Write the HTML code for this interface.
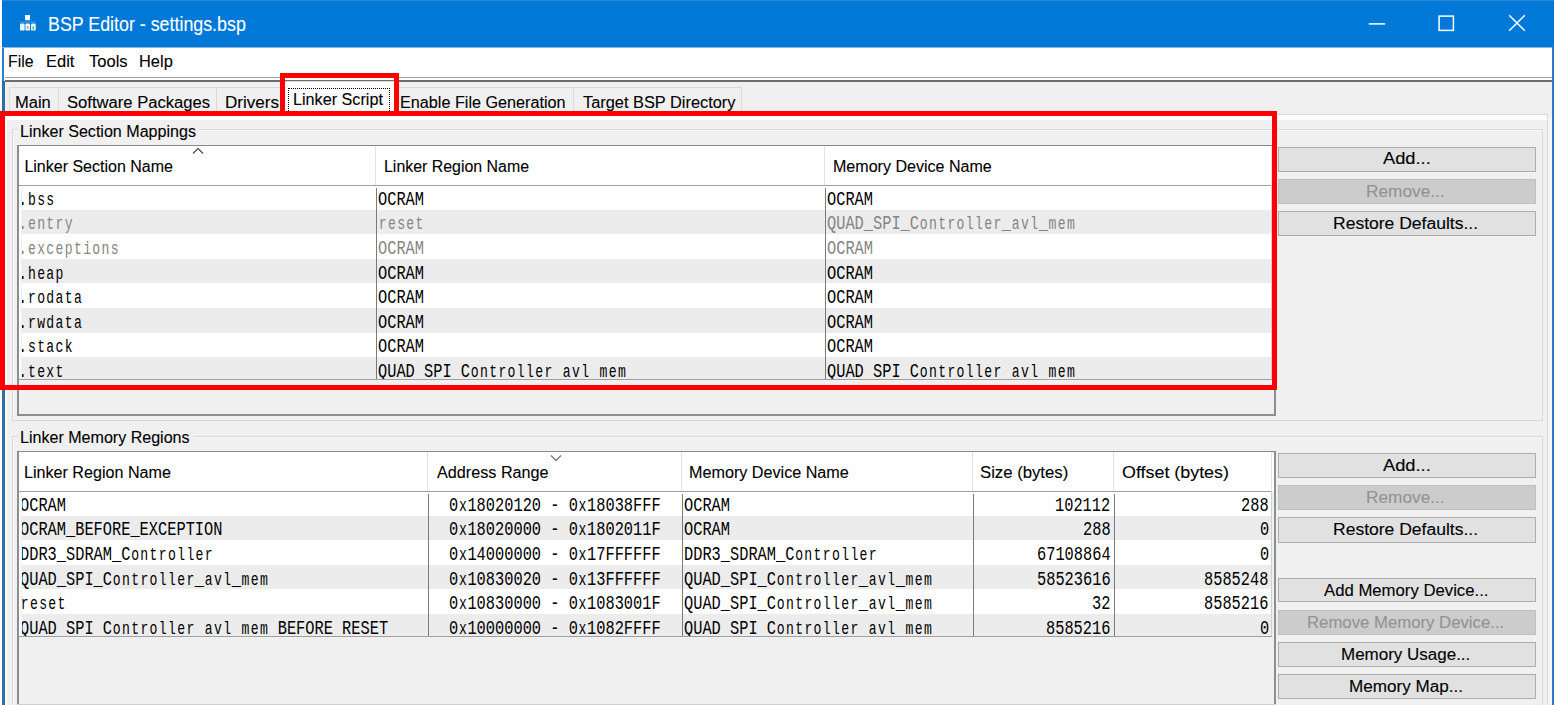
<!DOCTYPE html><html><head><meta charset="utf-8"><style>
html,body{margin:0;padding:0;width:1554px;height:705px;overflow:hidden;background:#fff}
body>div{position:absolute}
.t{white-space:pre;font-family:'Liberation Sans', sans-serif;-webkit-text-stroke:0.1px currentColor}
.lc{font-size:17.5px;letter-spacing:1.8px;position:relative;left:1px}
.m{position:absolute;white-space:pre;font-family:'Liberation Mono', monospace;font-size:20.5px;line-height:20.5px;transform:scaleX(0.7480);transform-origin:0 0}
</style></head><body>
<div style="left:0px;top:0px;width:1554px;height:705px;background:#f0f0f0"></div>
<div style="left:0px;top:0px;width:2px;height:705px;background:#fff"></div>
<div style="left:2px;top:0px;width:1552px;height:47px;background:#0078d7"></div>
<div style="left:2px;top:46px;width:1552px;height:1px;background:#0a70cc"></div>
<div style="left:2px;top:47px;width:1552px;height:1px;background:#80bbec"></div>
<div style="left:2px;top:0px;width:1552px;height:1px;background:#2a88d8"></div>
<div style="left:2px;top:48px;width:2px;height:33px;background:#2a80d4"></div>
<div style="left:2px;top:81px;width:3px;height:624px;background:#2f6fa8"></div>
<div style="left:1548px;top:117px;width:4px;height:588px;background:#f6f6f6"></div>
<div style="left:1552px;top:46px;width:2px;height:659px;background:#2a78c8"></div>
<svg style="position:absolute;left:16px;top:12px" width="24" height="24" viewBox="0 0 24 24">
<rect x="9" y="3" width="5" height="5.2" fill="#f4fbff"/>
<rect x="4" y="9.6" width="16" height="0.8" fill="#5aa8ec"/>
<rect x="4" y="11.6" width="4.6" height="7" rx="1.2" fill="#eaf6ff"/>
<rect x="9.4" y="11.6" width="4.6" height="7" rx="1.2" fill="#f2f8ff"/>
<rect x="15" y="11.6" width="4.8" height="7" rx="1.2" fill="#e0fbf4"/>
<rect x="10.8" y="14" width="1.8" height="3" fill="#e0a090"/>
<rect x="16.4" y="14.5" width="1.8" height="3" fill="#70c060"/>
</svg>
<div class="t" style="left:47.67px;top:14.85px;font-size:19.5px;line-height:19.5px;color:#fff;transform:scaleX(0.9140);transform-origin:0 0;">BSP Editor - settings.bsp</div>
<svg style="position:absolute;left:1360px;top:8px" width="180" height="30" viewBox="1360 8 180 30">
<path d="M1368.8 23.9 H1385.2" stroke="#fff" stroke-width="1.5" fill="none"/>
<rect x="1439.1" y="16.1" width="14.3" height="14.3" stroke="#fff" stroke-width="1.5" fill="none"/>
<path d="M1509.2 15.2 L1524.8 30.8 M1524.8 15.2 L1509.2 30.8" stroke="#fff" stroke-width="1.5" fill="none"/>
</svg>
<div style="left:4px;top:48px;width:1548px;height:29px;background:#fff"></div>
<div class="t" style="left:8.31px;top:54.40px;font-size:16px;line-height:16px;color:#000;transform:scaleX(0.9875);transform-origin:0 0;">File</div>
<div class="t" style="left:46.47px;top:54.40px;font-size:16px;line-height:16px;color:#000;transform:scaleX(1.0296);transform-origin:0 0;">Edit</div>
<div class="t" style="left:88.60px;top:54.40px;font-size:16px;line-height:16px;color:#000;transform:scaleX(1.0324);transform-origin:0 0;">Tools</div>
<div class="t" style="left:138.57px;top:54.40px;font-size:16px;line-height:16px;color:#000;transform:scaleX(1.0258);transform-origin:0 0;">Help</div>
<div style="left:4.5px;top:77px;width:1547.5px;height:1px;background:#a0a0a0"></div>
<div style="left:4.5px;top:78px;width:1547.5px;height:2px;background:#fff"></div>
<div style="left:4.5px;top:80px;width:1547.5px;height:1.5px;background:#6d6d6d"></div>
<div style="left:5px;top:114px;width:1543px;height:1px;background:#dadada"></div>
<div style="left:5px;top:115px;width:1542px;height:5px;background:#fdfdfd"></div>
<div style="left:5px;top:115px;width:2px;height:600px;background:#fbfdff"></div>
<div style="left:1547px;top:114px;width:1px;height:600px;background:#dadada"></div>
<div style="left:9px;top:87px;width:50px;height:28px;border:1px solid #dadada;border-bottom:none;box-sizing:border-box;background:#f0f0f0"></div>
<div class="t" style="left:15.27px;top:94.70px;font-size:16px;line-height:16px;color:#000;transform:scaleX(1.0303);transform-origin:0 0;">Main</div>
<div style="left:58px;top:87px;width:159px;height:28px;border:1px solid #dadada;border-bottom:none;box-sizing:border-box;background:#f0f0f0"></div>
<div class="t" style="left:66.66px;top:94.70px;font-size:16px;line-height:16px;color:#000;transform:scaleX(1.0382);transform-origin:0 0;">Software Packages</div>
<div style="left:216px;top:87px;width:68px;height:28px;border:1px solid #dadada;border-bottom:none;box-sizing:border-box;background:#f0f0f0"></div>
<div class="t" style="left:224.63px;top:94.70px;font-size:16px;line-height:16px;color:#000;transform:scaleX(1.0653);transform-origin:0 0;">Drivers</div>
<div style="left:394px;top:87px;width:180px;height:28px;border:1px solid #dadada;border-bottom:none;box-sizing:border-box;background:#f0f0f0"></div>
<div class="t" style="left:399.99px;top:94.70px;font-size:16px;line-height:16px;color:#000;transform:scaleX(1.0117);transform-origin:0 0;">Enable File Generation</div>
<div style="left:573px;top:87px;width:169px;height:28px;border:1px solid #dadada;border-bottom:none;box-sizing:border-box;background:#f0f0f0"></div>
<div class="t" style="left:583.40px;top:94.70px;font-size:16px;line-height:16px;color:#000;transform:scaleX(1.0228);transform-origin:0 0;">Target BSP Directory</div>
<div style="left:284px;top:81px;width:111px;height:35px;background:#fcfcfc;border:1px solid #dadada;border-bottom:none;box-sizing:border-box"></div>
<div style="left:288px;top:88px;width:102px;height:25px;border:1px dotted #000;box-sizing:border-box"></div>
<div class="t" style="left:292.59px;top:91.70px;font-size:16px;line-height:16px;color:#000;transform:scaleX(1.0114);transform-origin:0 0;">Linker Script</div>
<div style="left:12px;top:129px;width:1531px;height:292px;border:1px solid #d9d9d9;box-sizing:border-box"></div>
<div style="left:13px;top:130px;width:1529px;height:290px;border-top:1px solid #f7f7f7;border-left:1px solid #f7f7f7;box-sizing:border-box"></div>
<div style="left:18.3px;top:127px;width:180.7px;height:5px;background:#f0f0f0"></div>
<div class="t" style="left:20.30px;top:123.60px;font-size:16px;line-height:16px;color:#000;transform:scaleX(1.0040);transform-origin:0 0;">Linker Section Mappings</div>
<div style="left:12px;top:435.7px;width:1531px;height:300px;border:1px solid #d9d9d9;box-sizing:border-box"></div>
<div style="left:13px;top:436.7px;width:1529px;height:298px;border-top:1px solid #f7f7f7;border-left:1px solid #f7f7f7;box-sizing:border-box"></div>
<div style="left:18.2px;top:433.7px;width:174.6px;height:5px;background:#f0f0f0"></div>
<div class="t" style="left:20.20px;top:430.40px;font-size:16px;line-height:16px;color:#000;transform:scaleX(1.0036);transform-origin:0 0;">Linker Memory Regions</div>
<div style="left:17px;top:145px;width:1259px;height:271px;background:#f0f0f0"></div>
<div style="left:17px;top:145px;width:1259px;height:1px;background:#8a8a8a"></div>
<div style="left:17px;top:145px;width:2px;height:271px;background:#8e8e8e"></div>
<div style="left:1274px;top:145px;width:2px;height:271px;background:#8e8e8e"></div>
<div style="left:17px;top:414px;width:1259px;height:2px;background:#8e8e8e"></div>
<div style="left:19px;top:146px;width:1255px;height:39px;background:#fff"></div>
<div style="left:19px;top:185px;width:2px;height:195px;background:#fff"></div>
<div style="left:375px;top:146px;width:1px;height:39px;background:#e3e3e3"></div>
<div style="left:824px;top:146px;width:1px;height:39px;background:#e3e3e3"></div>
<div style="left:1271px;top:146px;width:1px;height:39px;background:#e3e3e3"></div>
<div class="t" style="left:24.40px;top:158.60px;font-size:16px;line-height:16px;color:#000;">Linker Section Name</div>
<div class="t" style="left:383.71px;top:158.60px;font-size:16px;line-height:16px;color:#000;transform:scaleX(0.9944);transform-origin:0 0;">Linker Region Name</div>
<div class="t" style="left:832.50px;top:158.60px;font-size:16px;line-height:16px;color:#000;transform:scaleX(1.0032);transform-origin:0 0;">Memory Device Name</div>
<div style="left:22px;top:185px;width:1249px;height:194px;overflow:hidden"><div style="position:absolute;left:0;top:0.00px;width:100%;height:25.10px;background:#fff"></div><div style="position:absolute;left:0;top:24.60px;width:100%;height:25.10px;background:#ececec"></div><div style="position:absolute;left:0;top:49.20px;width:100%;height:25.10px;background:#fff"></div><div style="position:absolute;left:0;top:73.80px;width:100%;height:25.10px;background:#ececec"></div><div style="position:absolute;left:0;top:98.40px;width:100%;height:25.10px;background:#fff"></div><div style="position:absolute;left:0;top:123.00px;width:100%;height:25.10px;background:#ececec"></div><div style="position:absolute;left:0;top:147.60px;width:100%;height:25.10px;background:#fff"></div><div style="position:absolute;left:0;top:172.20px;width:100%;height:25.10px;background:#ececec"></div><div style="position:absolute;left:354px;top:3px;width:1px;height:194px;background:#7a7a7a"></div><div style="position:absolute;left:803px;top:3px;width:1px;height:194px;background:#7a7a7a"></div><div class="m" style="left:-3.84px;top:4.80px;color:#000">.<span class="lc">bss</span></div><div class="m" style="left:356.35px;top:4.80px;color:#000">OCRAM</div><div class="m" style="left:805.35px;top:4.80px;color:#000">OCRAM</div><div class="m" style="left:-3.84px;top:29.40px;color:#858585">.<span class="lc">entry</span></div><div class="m" style="left:356.35px;top:29.40px;color:#858585"><span class="lc">reset</span></div><div class="m" style="left:805.35px;top:29.40px;color:#858585">QUAD_SPI_C<span class="lc">ontroller</span>_<span class="lc">avl</span>_<span class="lc">mem</span></div><div class="m" style="left:-3.84px;top:54.00px;color:#858585">.<span class="lc">exceptions</span></div><div class="m" style="left:356.35px;top:54.00px;color:#858585">OCRAM</div><div class="m" style="left:805.35px;top:54.00px;color:#858585">OCRAM</div><div class="m" style="left:-3.84px;top:78.60px;color:#000">.<span class="lc">heap</span></div><div class="m" style="left:356.35px;top:78.60px;color:#000">OCRAM</div><div class="m" style="left:805.35px;top:78.60px;color:#000">OCRAM</div><div class="m" style="left:-3.84px;top:103.20px;color:#000">.<span class="lc">rodata</span></div><div class="m" style="left:356.35px;top:103.20px;color:#000">OCRAM</div><div class="m" style="left:805.35px;top:103.20px;color:#000">OCRAM</div><div class="m" style="left:-3.84px;top:127.80px;color:#000">.<span class="lc">rwdata</span></div><div class="m" style="left:356.35px;top:127.80px;color:#000">OCRAM</div><div class="m" style="left:805.35px;top:127.80px;color:#000">OCRAM</div><div class="m" style="left:-3.84px;top:152.40px;color:#000">.<span class="lc">stack</span></div><div class="m" style="left:356.35px;top:152.40px;color:#000">OCRAM</div><div class="m" style="left:805.35px;top:152.40px;color:#000">OCRAM</div><div class="m" style="left:-3.84px;top:177.00px;color:#000">.<span class="lc">text</span></div><div class="m" style="left:356.35px;top:177.00px;color:#000">QUAD SPI C<span class="lc">ontroller</span> <span class="lc">avl</span> <span class="lc">mem</span></div><div class="m" style="left:805.35px;top:177.00px;color:#000">QUAD SPI C<span class="lc">ontroller</span> <span class="lc">avl</span> <span class="lc">mem</span></div></div><div style="left:19px;top:185px;width:1253px;height:1px;background:#a0a0a0"></div><div style="left:19px;top:379px;width:1253px;height:1px;background:#a0a0a0"></div><div style="left:1271px;top:185px;width:1px;height:194px;background:#d0d0d0"></div>
<div style="left:17px;top:451px;width:1259px;height:255px;background:#f0f0f0"></div>
<div style="left:17px;top:451px;width:1259px;height:1px;background:#8a8a8a"></div>
<div style="left:17px;top:451px;width:2px;height:255px;background:#8e8e8e"></div>
<div style="left:1274px;top:451px;width:2px;height:255px;background:#8e8e8e"></div>
<div style="left:17px;top:704px;width:1259px;height:2px;background:#d0d0d0"></div>
<div style="left:19px;top:452px;width:1255px;height:39px;background:#fff"></div>
<div style="left:19px;top:491px;width:2px;height:146px;background:#fff"></div>
<div style="left:427px;top:452px;width:1px;height:39px;background:#e3e3e3"></div>
<div style="left:681px;top:452px;width:1px;height:39px;background:#e3e3e3"></div>
<div style="left:972px;top:452px;width:1px;height:39px;background:#e3e3e3"></div>
<div style="left:1113px;top:452px;width:1px;height:39px;background:#e3e3e3"></div>
<div style="left:1271px;top:452px;width:1px;height:39px;background:#e3e3e3"></div>
<div class="t" style="left:23.99px;top:464.60px;font-size:16px;line-height:16px;color:#000;transform:scaleX(1.0069);transform-origin:0 0;">Linker Region Name</div>
<div class="t" style="left:437.30px;top:464.60px;font-size:16px;line-height:16px;color:#000;transform:scaleX(1.0118);transform-origin:0 0;">Address Range</div>
<div class="t" style="left:688.99px;top:464.60px;font-size:16px;line-height:16px;color:#000;transform:scaleX(1.0096);transform-origin:0 0;">Memory Device Name</div>
<div class="t" style="left:980.26px;top:464.60px;font-size:16px;line-height:16px;color:#000;transform:scaleX(1.0446);transform-origin:0 0;">Size (bytes)</div>
<div class="t" style="left:1121.78px;top:464.60px;font-size:16px;line-height:16px;color:#000;transform:scaleX(1.1170);transform-origin:0 0;">Offset (bytes)</div>
<div style="left:22px;top:491px;width:1249px;height:145px;overflow:hidden"><div style="position:absolute;left:0;top:0.00px;width:100%;height:25.10px;background:#fff"></div><div style="position:absolute;left:0;top:24.60px;width:100%;height:25.10px;background:#ececec"></div><div style="position:absolute;left:0;top:49.20px;width:100%;height:25.10px;background:#fff"></div><div style="position:absolute;left:0;top:73.80px;width:100%;height:25.10px;background:#ececec"></div><div style="position:absolute;left:0;top:98.40px;width:100%;height:25.10px;background:#fff"></div><div style="position:absolute;left:0;top:123.00px;width:100%;height:25.10px;background:#ececec"></div><div style="position:absolute;left:406px;top:3px;width:1px;height:145px;background:#7a7a7a"></div><div style="position:absolute;left:660px;top:3px;width:1px;height:145px;background:#7a7a7a"></div><div style="position:absolute;left:951px;top:3px;width:1px;height:145px;background:#7a7a7a"></div><div style="position:absolute;left:1092px;top:3px;width:1px;height:145px;background:#7a7a7a"></div><div class="m" style="left:-2.45px;top:4.80px;color:#000">OCRAM</div><div class="m" style="left:427.25px;top:4.80px;color:#000">0<span class="lc">x</span>18020120 - 0<span class="lc">x</span>18038FFF</div><div class="m" style="left:662.25px;top:4.80px;color:#000">OCRAM</div><div class="m" style="left:1032.90px;top:4.80px;color:#000">102112</div><div class="m" style="left:1218.87px;top:4.80px;color:#000">288</div><div class="m" style="left:-2.45px;top:29.40px;color:#000">OCRAM_BEFORE_EXCEPTION</div><div class="m" style="left:427.25px;top:29.40px;color:#000">0<span class="lc">x</span>18020000 - 0<span class="lc">x</span>1802011F</div><div class="m" style="left:662.25px;top:29.40px;color:#000">OCRAM</div><div class="m" style="left:1060.57px;top:29.40px;color:#000">288</div><div class="m" style="left:1237.57px;top:29.40px;color:#000">0</div><div class="m" style="left:-2.45px;top:54.00px;color:#000">DDR3_SDRAM_C<span class="lc">ontroller</span></div><div class="m" style="left:427.25px;top:54.00px;color:#000">0<span class="lc">x</span>14000000 - 0<span class="lc">x</span>17FFFFFF</div><div class="m" style="left:662.25px;top:54.00px;color:#000">DDR3_SDRAM_C<span class="lc">ontroller</span></div><div class="m" style="left:1014.95px;top:54.00px;color:#000">67108864</div><div class="m" style="left:1237.57px;top:54.00px;color:#000">0</div><div class="m" style="left:-2.45px;top:78.60px;color:#000">QUAD_SPI_C<span class="lc">ontroller</span>_<span class="lc">avl</span>_<span class="lc">mem</span></div><div class="m" style="left:427.25px;top:78.60px;color:#000">0<span class="lc">x</span>10830020 - 0<span class="lc">x</span>13FFFFFF</div><div class="m" style="left:662.25px;top:78.60px;color:#000">QUAD_SPI_C<span class="lc">ontroller</span>_<span class="lc">avl</span>_<span class="lc">mem</span></div><div class="m" style="left:1014.95px;top:78.60px;color:#000">58523616</div><div class="m" style="left:1182.22px;top:78.60px;color:#000">8585248</div><div class="m" style="left:-2.45px;top:103.20px;color:#000"><span class="lc">reset</span></div><div class="m" style="left:427.25px;top:103.20px;color:#000">0<span class="lc">x</span>10830000 - 0<span class="lc">x</span>1083001F</div><div class="m" style="left:662.25px;top:103.20px;color:#000">QUAD_SPI_C<span class="lc">ontroller</span>_<span class="lc">avl</span>_<span class="lc">mem</span></div><div class="m" style="left:1070.30px;top:103.20px;color:#000">32</div><div class="m" style="left:1182.22px;top:103.20px;color:#000">8585216</div><div class="m" style="left:-2.45px;top:127.80px;color:#000">QUAD SPI C<span class="lc">ontroller</span> <span class="lc">avl</span> <span class="lc">mem</span> BEFORE RESET</div><div class="m" style="left:427.25px;top:127.80px;color:#000">0<span class="lc">x</span>10000000 - 0<span class="lc">x</span>1082FFFF</div><div class="m" style="left:662.25px;top:127.80px;color:#000">QUAD SPI C<span class="lc">ontroller</span> <span class="lc">avl</span> <span class="lc">mem</span></div><div class="m" style="left:1023.92px;top:127.80px;color:#000">8585216</div><div class="m" style="left:1237.57px;top:127.80px;color:#000">0</div></div><div style="left:19px;top:491px;width:1253px;height:1px;background:#a0a0a0"></div><div style="left:19px;top:636px;width:1253px;height:1px;background:#a0a0a0"></div><div style="left:1271px;top:491px;width:1px;height:145px;background:#d0d0d0"></div>
<svg style="position:absolute;left:191px;top:146px" width="14" height="9" viewBox="0 0 14 9"><path d="M2 7.5 L7 2.5 L12 7.5" stroke="#555" stroke-width="1.3" fill="none"/></svg>
<svg style="position:absolute;left:549px;top:453px" width="14" height="9" viewBox="0 0 14 9"><path d="M2 2.5 L7 7.5 L12 2.5" stroke="#777" stroke-width="1.3" fill="none"/></svg>
<div style="left:1278px;top:146.5px;width:257.5px;height:25.099999999999994px;background:#e1e1e1;border:1px solid #adadad;box-sizing:border-box"></div>
<div class="t" style="left:1382.85px;top:151.30px;font-size:16px;line-height:16px;color:#000;transform:scaleX(1.1425);transform-origin:0 0;">Add...</div>
<div style="left:1278px;top:178.7px;width:257.5px;height:25.5px;background:#cccccc;border:1px solid #bfbfbf;box-sizing:border-box"></div>
<div class="t" style="left:1366.32px;top:183.50px;font-size:16px;line-height:16px;color:#939393;transform:scaleX(1.0789);transform-origin:0 0;">Remove...</div>
<div style="left:1278px;top:211.2px;width:257.5px;height:25.100000000000023px;background:#e1e1e1;border:1px solid #adadad;box-sizing:border-box"></div>
<div class="t" style="left:1333.46px;top:216.00px;font-size:16px;line-height:16px;color:#000;transform:scaleX(1.0946);transform-origin:0 0;">Restore Defaults...</div>
<div style="left:1278px;top:452.8px;width:257.5px;height:24.899999999999977px;background:#e1e1e1;border:1px solid #adadad;box-sizing:border-box"></div>
<div class="t" style="left:1382.85px;top:457.60px;font-size:16px;line-height:16px;color:#000;transform:scaleX(1.1425);transform-origin:0 0;">Add...</div>
<div style="left:1278px;top:485.4px;width:257.5px;height:24.600000000000023px;background:#cccccc;border:1px solid #bfbfbf;box-sizing:border-box"></div>
<div class="t" style="left:1366.32px;top:490.20px;font-size:16px;line-height:16px;color:#939393;transform:scaleX(1.0789);transform-origin:0 0;">Remove...</div>
<div style="left:1278px;top:517.4px;width:257.5px;height:25.300000000000068px;background:#e1e1e1;border:1px solid #adadad;box-sizing:border-box"></div>
<div class="t" style="left:1333.46px;top:522.20px;font-size:16px;line-height:16px;color:#000;transform:scaleX(1.0946);transform-origin:0 0;">Restore Defaults...</div>
<div style="left:1278px;top:578.1px;width:257.5px;height:24.399999999999977px;background:#e1e1e1;border:1px solid #adadad;box-sizing:border-box"></div>
<div class="t" style="left:1324.20px;top:582.90px;font-size:16px;line-height:16px;color:#000;transform:scaleX(1.0449);transform-origin:0 0;">Add Memory Device...</div>
<div style="left:1278px;top:610.2px;width:257.5px;height:24.799999999999955px;background:#cccccc;border:1px solid #bfbfbf;box-sizing:border-box"></div>
<div class="t" style="left:1307.35px;top:615.00px;font-size:16px;line-height:16px;color:#939393;transform:scaleX(1.0462);transform-origin:0 0;">Remove Memory Device...</div>
<div style="left:1278px;top:642.2px;width:257.5px;height:25.299999999999955px;background:#e1e1e1;border:1px solid #adadad;box-sizing:border-box"></div>
<div class="t" style="left:1341.49px;top:647.00px;font-size:16px;line-height:16px;color:#000;transform:scaleX(1.0613);transform-origin:0 0;">Memory Usage...</div>
<div style="left:1278px;top:674.1px;width:257.5px;height:25.299999999999955px;background:#e1e1e1;border:1px solid #adadad;box-sizing:border-box"></div>
<div class="t" style="left:1349.08px;top:678.90px;font-size:16px;line-height:16px;color:#000;transform:scaleX(1.0683);transform-origin:0 0;">Memory Map...</div>
<div style="left:0px;top:111px;width:1277px;height:279px;border:5px solid #f00;box-sizing:border-box"></div>
<div style="left:280px;top:73px;width:119px;height:43px;border:5px solid #f00;border-bottom:none;box-sizing:border-box"></div>
</body></html>
